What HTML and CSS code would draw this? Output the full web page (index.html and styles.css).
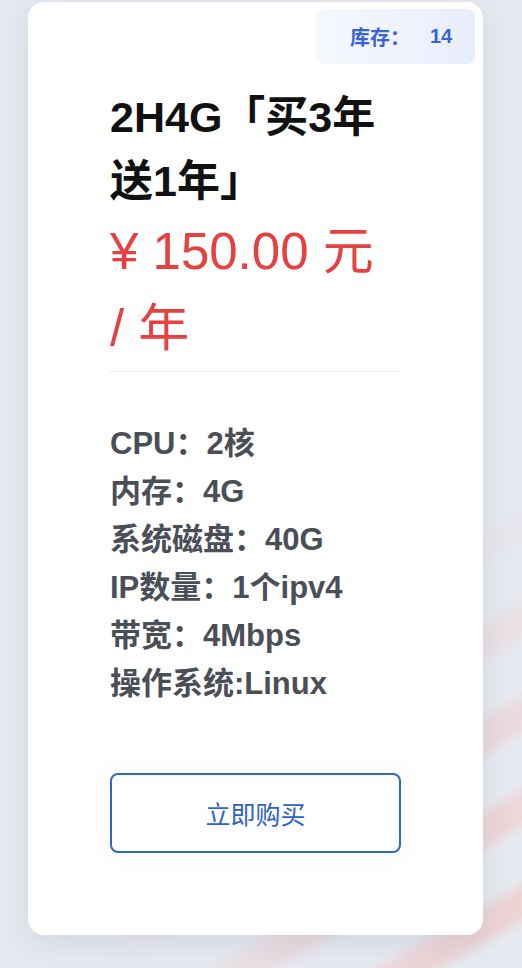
FILE: index.html
```html
<!DOCTYPE html>
<html lang="zh-CN">
<head>
  <meta charset="UTF-8">
  <meta name="viewport" content="width=device-width, initial-scale=1.0">
  <title>云服务器套餐</title>
  <link rel="stylesheet" href="styles.css">
</head>
<body>
  <div class="plan-card">
    <div class="stock">库存：<span class="stock-num">14</span></div>
    <h2 class="plan-title">2H4G「买3年送1年」</h2>
    <div class="plan-price">¥ 150.00 元 / 年</div>
    <div class="divider"></div>
    <ul class="specs">
      <li>CPU：2核</li>
      <li>内存：4G</li>
      <li>系统磁盘：40G</li>
      <li>IP数量：1个ipv4</li>
      <li>带宽：4Mbps</li>
      <li>操作系统:Linux</li>
    </ul>
    <button class="buy-btn">立即购买</button>
  </div>
</body>
</html>
```

FILE: styles.css
```css
body {
  margin: 0;
  padding: 2px 0 0 28px;
  min-height: 968px;
  box-sizing: border-box;
  font-family: "Liberation Sans", "Noto Sans CJK SC", sans-serif;
  background-color: #e6e9f0;
  background-image:
    radial-gradient(ellipse 80% 50% at 100% 100%, rgba(230, 233, 240, 0) 0%, rgba(230, 233, 240, 0.3) 45%, #e6e9f0 100%),
    repeating-linear-gradient(150deg, #e6e9f0 0px, #e6e9f0 36px, #edd2d2 50px, #edd2d2 68px, #e6e9f0 82px);
}

.plan-card {
  position: relative;
  width: 455px;
  box-sizing: border-box;
  padding: 83px 82px 82px;
  background: #ffffff;
  border-radius: 16px;
  box-shadow: 0 8px 28px rgba(110, 120, 150, 0.16);
}

.stock {
  position: absolute;
  top: 7px;
  right: 8px;
  width: 159px;
  height: 55px;
  box-sizing: border-box;
  padding-left: 34px;
  display: flex;
  align-items: center;
  border-radius: 8px;
  background: linear-gradient(90deg, #f6f8ff, #e9eefc);
  color: #3a63d8;
  font-size: 20px;
  font-weight: bold;
}

.stock-num {
  margin-left: 20px;
}

.plan-title {
  margin: 0;
  font-size: 43px;
  line-height: 64px;
  font-weight: bold;
  color: #111111;
}

.plan-price {
  font-size: 51px;
  line-height: 77px;
  color: #e6403f;
}

.divider {
  height: 1px;
  margin-top: 4px;
  background: #ebebeb;
}

.specs {
  list-style: none;
  margin: 48px 0 0;
  padding: 0;
  font-size: 31px;
  line-height: 48px;
  font-weight: bold;
  color: #4a4e56;
}

.buy-btn {
  display: block;
  width: 100%;
  height: 80px;
  margin-top: 65px;
  border: 2px solid #3167c6;
  border-radius: 8px;
  background: #ffffff;
  color: #2c62c6;
  font-family: inherit;
  font-size: 25px;
  cursor: pointer;
  box-shadow: 0 0 24px rgba(120, 140, 180, 0.06);
}
```
